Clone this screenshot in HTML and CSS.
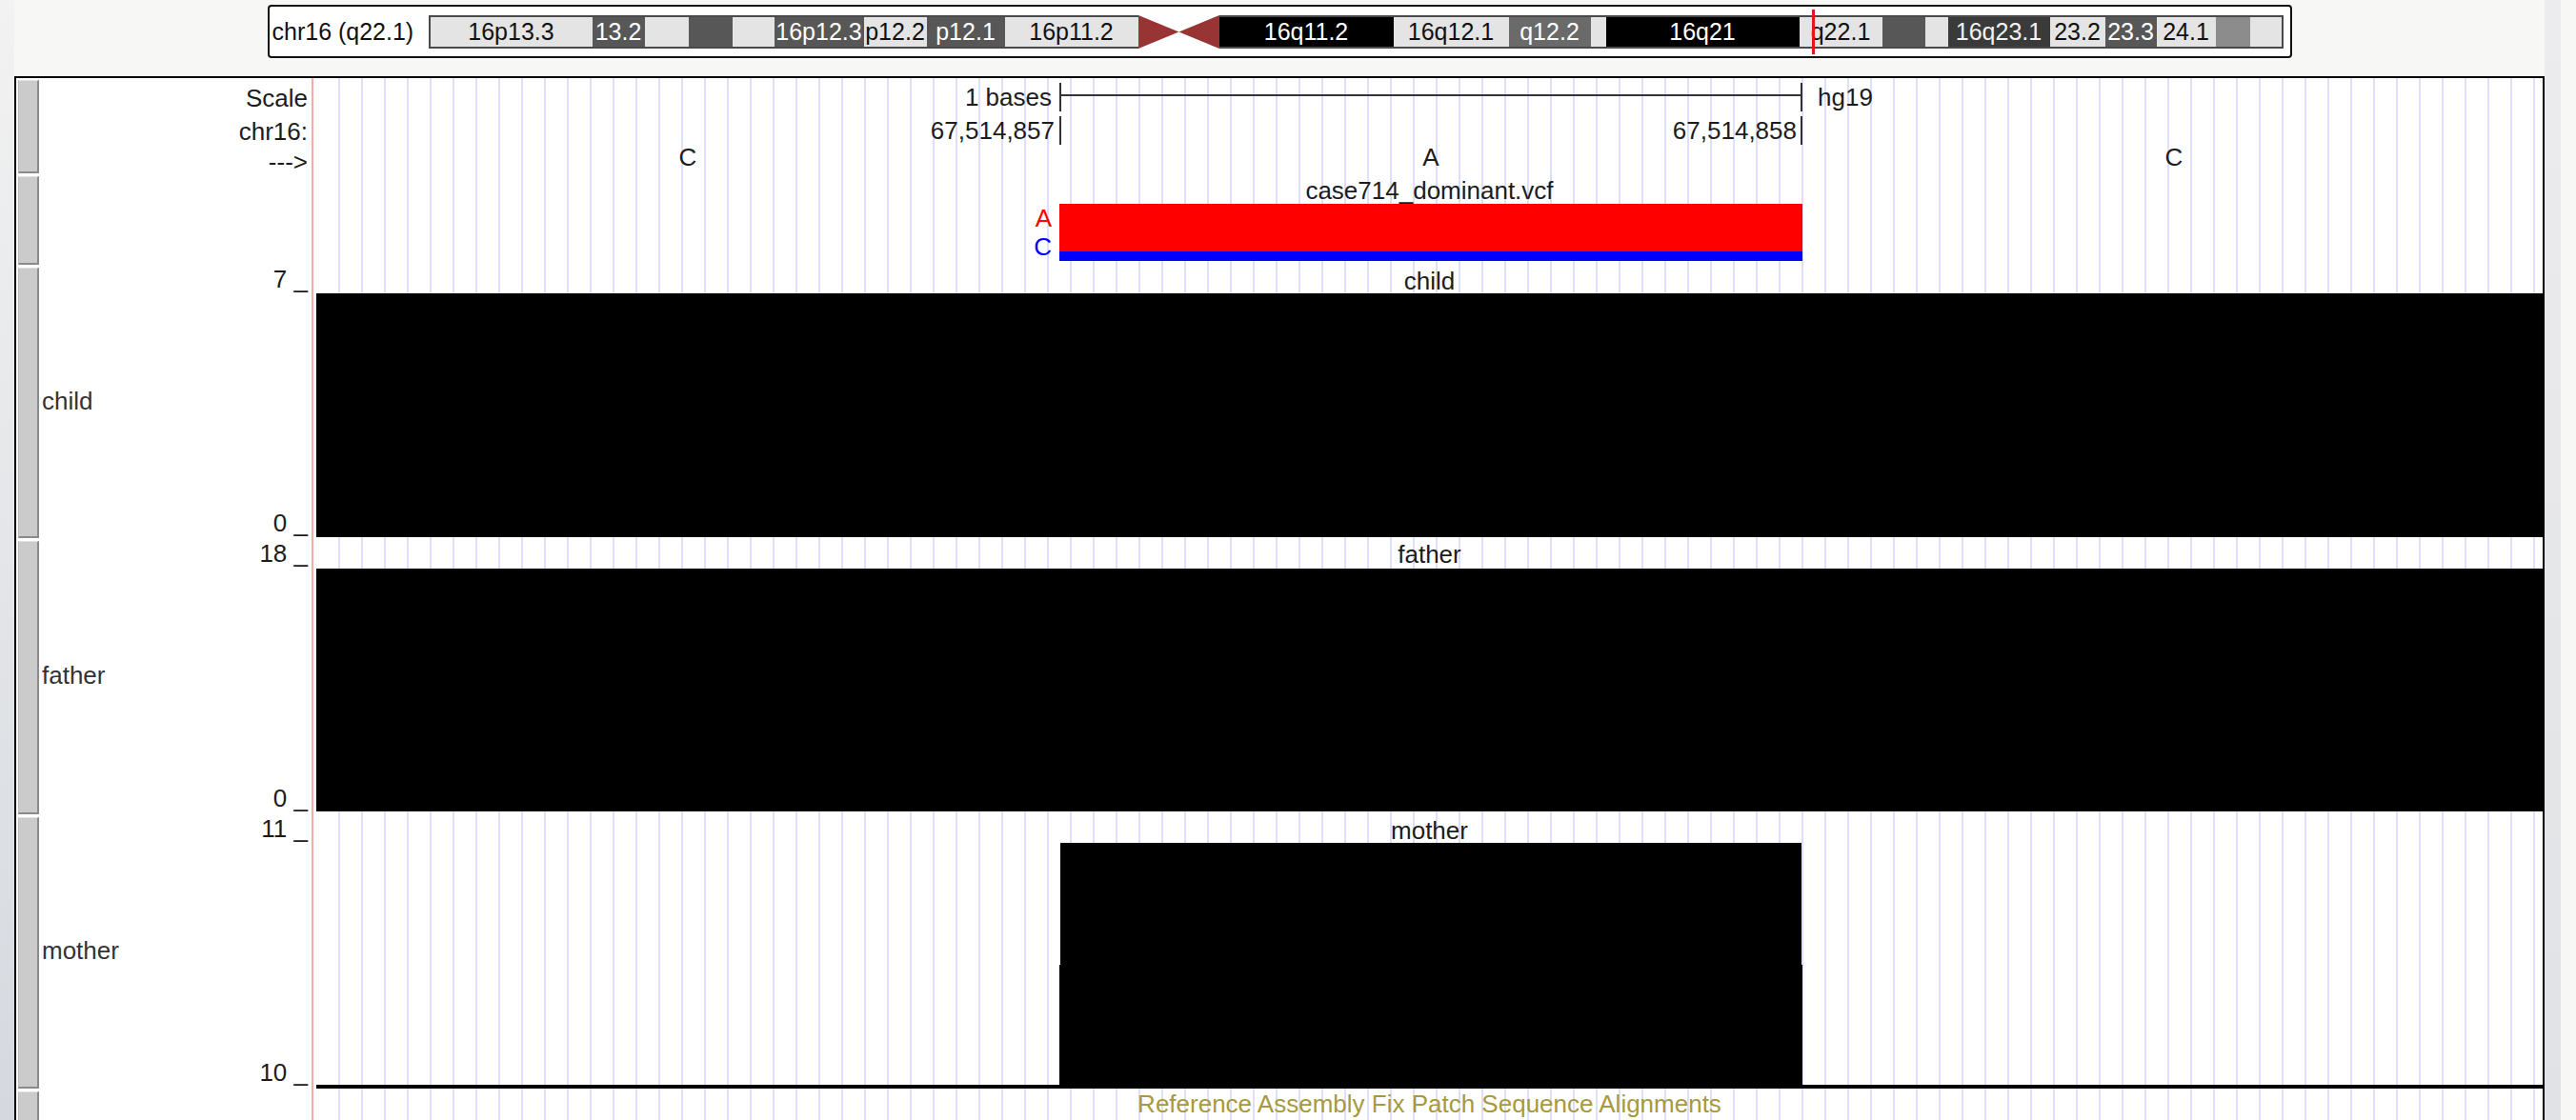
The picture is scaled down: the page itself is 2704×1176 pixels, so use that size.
FILE: index.html
```html
<!DOCTYPE html>
<html lang="en">
<head>
<meta charset="utf-8">
<title>UCSC Genome Browser - chr16</title>
<link rel="stylesheet" href="styles.css">
</head>
<body>
<div class="ideo-wrap">
  <div class="ideo-box">
    <span class="ideo-chrom">chr16 (q22.1)</span>
    <div class="ideo">
      <div class="band lt first" style="width:172px">16p13.3</div>
      <div class="band dk" style="width:55px">13.2</div>
      <div class="band lt" style="width:46px"></div>
      <div class="band dk" style="width:46px"></div>
      <div class="band lt" style="width:44px"></div>
      <div class="band dk" style="width:94px">16p12.3</div>
      <div class="band lt" style="width:66px">p12.2</div>
      <div class="band dk" style="width:82px">p12.1</div>
      <div class="band lt" style="width:140px">16p11.2</div>
      <svg class="cen" width="85" height="35" viewBox="0 0 85 35"><polygon points="0,0 0,35 42.5,17.5" fill="#993434"/><polygon points="85,0 85,35 42.5,17.5" fill="#993434"/></svg>
      <div class="band bk" style="width:183px">16q11.2</div>
      <div class="band lt" style="width:121px">16q12.1</div>
      <div class="band g6" style="width:86px">q12.2</div>
      <div class="band lt" style="width:16px"></div>
      <div class="band bk" style="width:203px">16q21</div>
      <div class="band lt" style="width:87px">q22.1</div>
      <div class="band dk" style="width:45px"></div>
      <div class="band lt" style="width:24px"></div>
      <div class="band d3" style="width:107px">16q23.1</div>
      <div class="band lt" style="width:58px">23.2</div>
      <div class="band dk" style="width:54px">23.3</div>
      <div class="band lt" style="width:62px">24.1</div>
      <div class="band md" style="width:36px"></div>
      <div class="band lt last" style="width:35px"></div>
      <div class="ideo-mark"></div>
    </div>
  </div>
</div>

<div class="browser">
  <!-- Base position -->
  <div class="track pos">
    <div class="btn-cell"><div class="btn"></div></div>
    <div class="label-cell pos-labels">
      <div class="scale-lbl">Scale</div>
      <div class="chr-lbl">chr16:</div>
      <div class="dir-lbl">---&gt;</div>
    </div>
    <div class="data-cell">
      <div class="bases scale-line">
        <div class="base-cell right pad-scale">1 bases</div>
        <div class="base-cell ticks"><div class="scale-rule"></div></div>
        <div class="base-cell pad-db">hg19</div>
      </div>
      <div class="bases coord-line">
        <div class="base-cell right pad-coord">67,514,857</div>
        <div class="base-cell ticks right pad-coord2">67,514,858</div>
        <div class="base-cell"></div>
      </div>
      <div class="bases seq-line">
        <div class="base-cell center">C</div>
        <div class="base-cell center">A</div>
        <div class="base-cell center">C</div>
      </div>
    </div>
  </div>

  <!-- VCF -->
  <div class="track vcf">
    <div class="btn-cell"><div class="btn"></div></div>
    <div class="label-cell"></div>
    <div class="data-cell">
      <div class="track-title vcf-title">case714_dominant.vcf</div>
      <div class="bases allele-rows">
        <div class="base-cell allele-labels">
          <span class="allele-a">A</span>
          <span class="allele-c">C</span>
        </div>
        <div class="base-cell allele-bars">
          <div class="bar-ref"></div>
          <div class="bar-alt"></div>
        </div>
        <div class="base-cell"></div>
      </div>
    </div>
  </div>

  <!-- child -->
  <div class="track wig child">
    <div class="btn-cell"><div class="btn"></div></div>
    <div class="label-cell wig-labels">
      <div class="axis">7 _</div>
      <div class="track-name">child</div>
      <div class="axis">0 _</div>
    </div>
    <div class="data-cell">
      <div class="track-title">child</div>
      <div class="plot-fill"></div>
    </div>
  </div>

  <!-- father -->
  <div class="track wig father">
    <div class="btn-cell"><div class="btn"></div></div>
    <div class="label-cell wig-labels">
      <div class="axis">18 _</div>
      <div class="track-name">father</div>
      <div class="axis">0 _</div>
    </div>
    <div class="data-cell">
      <div class="track-title">father</div>
      <div class="plot-fill"></div>
    </div>
  </div>

  <!-- mother -->
  <div class="track wig mother">
    <div class="btn-cell"><div class="btn"></div></div>
    <div class="label-cell wig-labels">
      <div class="axis">11 _</div>
      <div class="track-name">mother</div>
      <div class="axis">10 _</div>
    </div>
    <div class="data-cell">
      <div class="track-title">mother</div>
      <div class="bases mother-plot">
        <div class="base-cell"></div>
        <div class="base-cell mother-bar">
          <div class="mother-upper"></div>
          <div class="mother-lower"></div>
        </div>
        <div class="base-cell"></div>
      </div>
      <div class="baseline-rule"></div>
    </div>
  </div>

  <!-- fix patches -->
  <div class="track fix">
    <div class="btn-cell"><div class="btn"></div></div>
    <div class="label-cell"></div>
    <div class="data-cell">
      <div class="track-title fix-title">Reference Assembly Fix Patch Sequence Alignments</div>
    </div>
  </div>
</div>
</body>
</html>
```

FILE: styles.css
```css
* {
  box-sizing: border-box;
  margin: 0;
  padding: 0;
}

html,
body {
  width: 2704px;
  height: 1176px;
  overflow: hidden;
}

body {
  font-family: "Liberation Sans", Arial, Helvetica, sans-serif;
  font-size: 25px;
  color: #222;
  background-color: #f7f7f5;
  background-image:
    linear-gradient(#f2f2f2, #d5d9df),
    linear-gradient(#ececee, #e1e2e5);
  background-size: 15px 100%, 17px 100%;
  background-position: 0 0, 2671px 0;
  background-repeat: no-repeat;
}

/* ---------- ideogram ---------- */
.ideo-wrap {
  margin-left: 15px;
  width: 2656px;
  padding-top: 5px;
  display: flex;
  justify-content: center;
}

.ideo-box {
  width: 2125px;
  height: 56px;
  border: 2px solid #111;
  border-radius: 4px;
  background: #fff;
  display: flex;
  align-items: center;
  padding-left: 3px;
}

.ideo-chrom {
  flex: none;
  width: 164px;
  white-space: nowrap;
  line-height: 30px;
  color: #111;
}

.ideo {
  position: relative;
  display: flex;
  height: 35px;
}

.band {
  flex: none;
  height: 35px;
  border-top: 2px solid #4a4a4a;
  border-bottom: 2px solid #4a4a4a;
  line-height: 31px;
  text-align: center;
  white-space: nowrap;
}

.band.first { border-left: 2px solid #4a4a4a; }
.band.last { border-right: 2px solid #4a4a4a; }

.band.lt { background: #e4e4e4; color: #111; }
.band.dk { background: #575757; color: #fff; }
.band.bk { background: #000; color: #fff; }
.band.g6 { background: #6a6a6a; color: #fff; }
.band.d3 { background: #3a3a3a; color: #f2f2f2; }
.band.md { background: #8c8c8c; }

.cen {
  flex: none;
  display: block;
}

.ideo-mark {
  position: absolute;
  left: 1452px;
  top: -6px;
  width: 3px;
  height: 47px;
  background: #e8141c;
}

/* ---------- browser image ---------- */
.browser {
  margin: 19px 0 0 15px;
  width: 2656px;
  height: 1110px;
  border: 2px solid #000;
  background: #fff;
  overflow: hidden;
  display: flex;
  flex-direction: column;
  font-size: 26px;
  color: #1c1c1c;
}

.track {
  display: flex;
  flex: none;
}

.track.pos { height: 101px; }
.track.vcf { height: 96px; }
.track.child { height: 287px; }
.track.father { height: 290px; }
.track.mother { height: 288px; }
.track.fix { flex: 1; }

.btn-cell {
  flex: none;
  width: 24px;
  padding: 2px 0 1px 2px;
  display: flex;
  flex-direction: column;
}

.btn {
  flex: 1;
  background: #cbcbcb;
  border-top: 1px solid #e2e2e2;
  border-left: 1px solid #b9b9b9;
  border-right: 2px solid #8a8a8a;
  border-bottom: 2px solid #8a8a8a;
}

.label-cell {
  flex: none;
  width: 286px;
  padding: 0 4px 0 3px;
}

.data-cell {
  flex: 1;
  min-width: 0;
  border-left: 2px solid #ffa8a8;
  padding-left: 3px;
  background-image: repeating-linear-gradient(to right, transparent 0 22px, #dedeff 22px 24px);
  background-origin: content-box;
  background-clip: content-box;
  background-position: 1px 0;
  display: flex;
  flex-direction: column;
}

.bases {
  display: grid;
  grid-template-columns: 780px 780px 780px;
  flex: none;
}

.base-cell {
  white-space: nowrap;
}

.right { text-align: right; }
.center { text-align: center; }

/* base position track */
.pos-labels {
  text-align: right;
  padding-top: 7px;
  line-height: 28px;
}

.chr-lbl { margin-top: 7px; }
.dir-lbl { margin-top: 4px; }

.scale-line {
  margin-top: 5px;
  height: 30px;
  line-height: 30px;
}

.pad-scale { padding-right: 8px; }
.pad-db { padding-left: 16px; }

.ticks {
  border-left: 2px solid #333;
  border-right: 2px solid #333;
}

.scale-rule {
  margin-top: 12px;
  height: 2px;
  background: #333;
}

.coord-line {
  margin-top: 5px;
  height: 27px;
  line-height: 30px;
}

.pad-coord { padding-right: 5px; }
.pad-coord2 { padding-right: 4px; }

.seq-line {
  margin-top: 1px;
  height: 30px;
  line-height: 30px;
}

/* titles */
.track-title {
  flex: none;
  text-align: center;
  white-space: nowrap;
  line-height: 33px;
  height: 29px;
  overflow: visible;
}

.vcf-title {
  height: 31px;
  line-height: 35px;
}

.father .track-title { height: 31px; }

.fix-title {
  height: 30px;
  line-height: 30px;
  color: #a8993c;
}

/* vcf */
.allele-rows { height: 60px; }

.allele-labels {
  display: flex;
  flex-direction: column;
  align-items: flex-end;
  padding-right: 8px;
  line-height: 30px;
}

.allele-a { color: #ff0000; }
.allele-c { color: #0000ff; }

.allele-bars {
  display: flex;
  flex-direction: column;
}

.bar-ref {
  height: 50px;
  background: #ff0000;
}

.bar-alt {
  height: 10px;
  background: #0000ff;
}

/* wiggle tracks */
.wig-labels {
  display: flex;
  flex-direction: column;
  text-align: right;
  padding-bottom: 3px;
}

.father .wig-labels { padding-top: 1px; padding-bottom: 4px; }
.mother .wig-labels { padding-bottom: 4px; }

.axis {
  line-height: 28px;
  white-space: pre;
}

.track-name {
  flex: 1;
  display: flex;
  align-items: center;
  text-align: left;
  font-size: 26px;
  color: #333;
}

.plot-fill {
  flex: none;
  background: #000;
}

.child .plot-fill { height: 256px; }
.father .plot-fill { height: 255px; }

.mother-plot { height: 254px; }

.mother-bar {
  display: flex;
  flex-direction: column;
}

.mother-upper {
  height: 128px;
  margin: 0 1px;
  background: #000;
}

.mother-lower {
  flex: 1;
  background: #000;
}

.baseline-rule {
  flex: none;
  height: 4px;
  background: #000;
}
```
